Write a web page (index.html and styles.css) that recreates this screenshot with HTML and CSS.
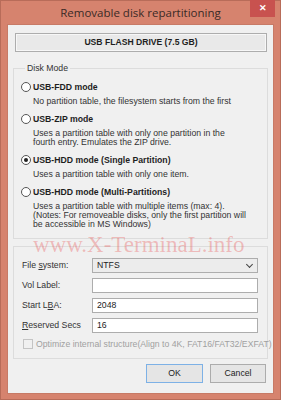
FILE: index.html
```html
<!DOCTYPE html>
<html lang="en">
  <head>
    <meta charset="UTF-8" />
    <title>Removable disk repartitioning</title>
    <link rel="stylesheet" href="styles.css">
  </head>
  <body>
    <div class="window">
      <div class="titlebar">
        <span class="title">Removable disk repartitioning</span>
        <span class="close">&#x2715;</span>
      </div>
      <div class="client">
        <div class="drive">USB FLASH DRIVE (7.5 GB)</div>

        <fieldset class="group modes">
          <legend>Disk Mode</legend>
          <div class="mode">
            <div class="mode-title"><span class="radio"></span>USB-FDD mode</div>
            <div class="desc">No partition table, the filesystem starts from the first</div>
          </div>
          <div class="mode">
            <div class="mode-title"><span class="radio"></span>USB-ZIP mode</div>
            <div class="desc">Uses a partition table with only one partition in the<br>fourth entry. Emulates the ZIP drive.</div>
          </div>
          <div class="mode">
            <div class="mode-title"><span class="radio checked"></span>USB-HDD mode (Single Partition)</div>
            <div class="desc">Uses a partition table with only one item.</div>
          </div>
          <div class="mode">
            <div class="mode-title"><span class="radio"></span>USB-HDD mode (Multi-Partitions)</div>
            <div class="desc">Uses a partition table with multiple items (max: 4).<br>(Notes: For removeable disks, only the first partition will<br>be accessible in MS Windows)</div>
          </div>
        </fieldset>

        <div class="group options">
          <div class="field">
            <label>File <u>s</u>ystem:</label>
            <div class="box select">NTFS<span class="chevron"></span></div>
          </div>
          <div class="field">
            <label>Vol Label:</label>
            <div class="box"></div>
          </div>
          <div class="field">
            <label>Start L<u>B</u>A:</label>
            <div class="box">2048</div>
          </div>
          <div class="field">
            <label><u>R</u>eserved Secs</label>
            <div class="box">16</div>
          </div>
          <div class="check-row">
            <span class="checkbox"></span>Optimize internal structure(Align to 4K, FAT16/FAT32/EXFAT)
          </div>
        </div>

        <div class="buttons">
          <div class="button default">OK</div>
          <div class="button">Cancel</div>
        </div>

        <div class="watermark">www.X-TerminaL.info</div>
      </div>
    </div>
  </body>
</html>
```

FILE: styles.css
```css
html,
body {
  margin: 0;
  padding: 0;
}
body {
  width: 281px;
  height: 400px;
  font-family: "Liberation Sans", Arial, sans-serif;
  font-size: 8.7px;
  color: #1e1e1e;
}
.window {
  box-sizing: border-box;
  height: 400px;
  background-color: #d6836e;
  border: 1px solid #b86c59;
  padding: 0 6px 5px 6px;
}
.titlebar {
  position: relative;
  height: 23px;
  text-align: center;
}
.title {
  display: inline-block;
  margin-top: 5px;
  font-family: "Open Sans", sans-serif;
  font-size: 11.5px;
  line-height: 14px;
  color: #3a2a26;
}
.close {
  position: absolute;
  top: -1px;
  right: -1px;
  width: 25px;
  height: 17px;
  background-color: #c8524f;
  color: #fff;
  font-size: 9px;
  font-weight: bold;
  line-height: 17px;
  text-align: center;
}
.client {
  position: relative;
  box-sizing: border-box;
  height: 370px;
  background-color: #f0f0f0;
  border: 1px solid #c77a66;
  padding: 8px 5px 0 5px;
}
.drive {
  box-sizing: border-box;
  height: 19px;
  margin: 0 1px 0 2px;
  border: 1px solid #adadad;
  background-color: #e9e9e9;
  box-shadow: inset 0 0 0 1px #f7f7f7;
  font-weight: bold;
  font-size: 8.6px;
  line-height: 17px;
  text-align: center;
}
.group {
  margin: 0;
  border: 1px solid #dcdcdc;
}
.modes {
  margin-top: 11px;
  padding: 7px 6px 9px 7px;
}
.modes legend {
  padding: 0 2px;
  margin-left: 4px;
  color: #333;
  line-height: 10px;
}
.mode {
  margin-bottom: 6.5px;
}
.mode:last-child {
  margin-bottom: 0;
}
.mode-title {
  display: flex;
  align-items: center;
  height: 14px;
  font-weight: bold;
}
.radio {
  box-sizing: border-box;
  flex-shrink: 0;
  width: 10px;
  height: 10px;
  margin-right: 2px;
  border: 1px solid #555;
  border-radius: 50%;
  background-color: #fff;
  position: relative;
}
.radio.checked::after {
  content: "";
  position: absolute;
  left: 2px;
  top: 2px;
  width: 4px;
  height: 4px;
  border-radius: 50%;
  background-color: #222;
}
.desc {
  margin-top: 2.5px;
  padding-left: 12px;
  line-height: 9px;
  color: #333;
}
.options {
  margin-top: 7px;
  padding: 11px 9px 8px 8px;
}
.field {
  display: flex;
  align-items: center;
  height: 15px;
  margin-bottom: 5px;
}
.field label {
  width: 70px;
  color: #333;
}
.box {
  box-sizing: border-box;
  flex: 1;
  height: 15px;
  border: 1px solid #adadad;
  background-color: #fff;
  padding: 0 4px;
  line-height: 13px;
  color: #222;
}
.select {
  position: relative;
  background-color: #ececec;
}
.chevron {
  position: absolute;
  right: 5px;
  top: 3px;
  width: 4px;
  height: 4px;
  border-right: 1px solid #444;
  border-bottom: 1px solid #444;
  transform: rotate(45deg);
}
.check-row {
  display: flex;
  align-items: center;
  height: 12px;
  margin-top: 3px;
  color: #a0a0a0;
  white-space: nowrap;
}
.checkbox {
  box-sizing: border-box;
  flex-shrink: 0;
  width: 10px;
  height: 10px;
  margin: 0 3px 0 1px;
  border: 1px solid #c4c4c4;
  background-color: #f0f0f0;
}
.buttons {
  display: flex;
  justify-content: flex-end;
  gap: 7px;
  margin-top: 5px;
  padding-right: 2px;
}
.button {
  box-sizing: border-box;
  width: 56px;
  height: 19px;
  border: 1px solid #acacac;
  background-color: #e5e5e5;
  line-height: 17px;
  text-align: center;
  color: #222;
}
.button.default {
  width: 57px;
  border-color: #7db1e6;
}
.watermark {
  position: absolute;
  left: 25px;
  top: 207px;
  font-family: "Liberation Serif", "Times New Roman", serif;
  font-size: 23px;
  line-height: 26px;
  color: rgba(232, 70, 70, 0.32);
  pointer-events: none;
}
```
